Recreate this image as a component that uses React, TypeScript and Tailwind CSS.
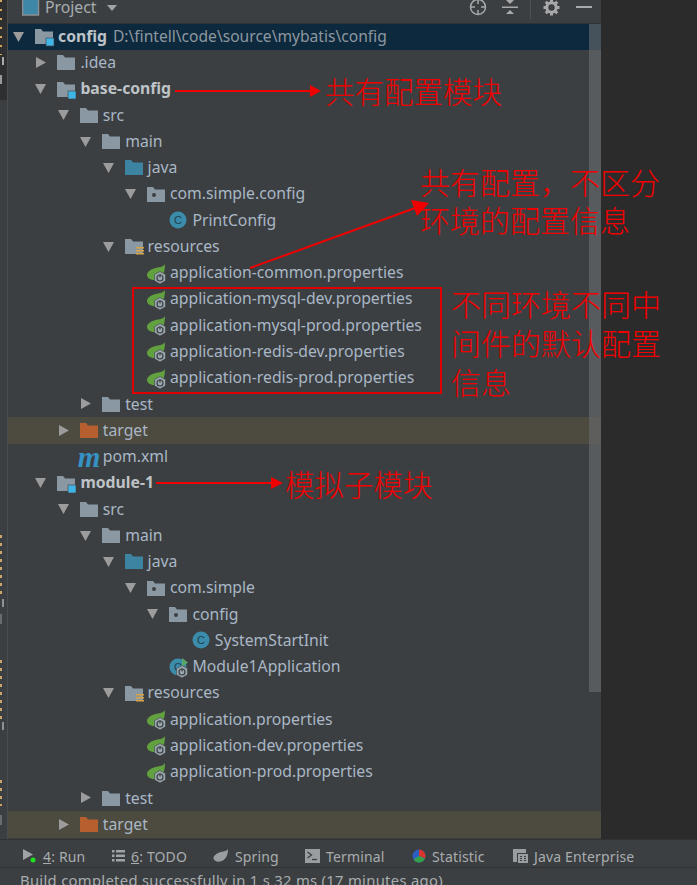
type Kind = 'module' | 'folder' | 'source' | 'package' | 'res' | 'excluded' | 'class' | 'app' | 'spring' | 'maven';

type Row = {
  depth: number;
  name: string;
  kind: Kind;
  open?: boolean;
  bold?: boolean;
  path?: string;
  selected?: boolean;
  tint?: boolean;
};

const rows: Row[] = [
  { depth: 0, name: 'config', kind: 'module', open: true, bold: true, path: 'D:\\fintell\\code\\source\\mybatis\\config', selected: true },
  { depth: 1, name: '.idea', kind: 'folder', open: false },
  { depth: 1, name: 'base-config', kind: 'module', open: true, bold: true },
  { depth: 2, name: 'src', kind: 'folder', open: true },
  { depth: 3, name: 'main', kind: 'folder', open: true },
  { depth: 4, name: 'java', kind: 'source', open: true },
  { depth: 5, name: 'com.simple.config', kind: 'package', open: true },
  { depth: 6, name: 'PrintConfig', kind: 'class' },
  { depth: 4, name: 'resources', kind: 'res', open: true },
  { depth: 5, name: 'application-common.properties', kind: 'spring' },
  { depth: 5, name: 'application-mysql-dev.properties', kind: 'spring' },
  { depth: 5, name: 'application-mysql-prod.properties', kind: 'spring' },
  { depth: 5, name: 'application-redis-dev.properties', kind: 'spring' },
  { depth: 5, name: 'application-redis-prod.properties', kind: 'spring' },
  { depth: 3, name: 'test', kind: 'folder', open: false },
  { depth: 2, name: 'target', kind: 'excluded', open: false, tint: true },
  { depth: 2, name: 'pom.xml', kind: 'maven' },
  { depth: 1, name: 'module-1', kind: 'module', open: true, bold: true },
  { depth: 2, name: 'src', kind: 'folder', open: true },
  { depth: 3, name: 'main', kind: 'folder', open: true },
  { depth: 4, name: 'java', kind: 'source', open: true },
  { depth: 5, name: 'com.simple', kind: 'package', open: true },
  { depth: 6, name: 'config', kind: 'package', open: true },
  { depth: 7, name: 'SystemStartInit', kind: 'class' },
  { depth: 6, name: 'Module1Application', kind: 'app' },
  { depth: 4, name: 'resources', kind: 'res', open: true },
  { depth: 5, name: 'application.properties', kind: 'spring' },
  { depth: 5, name: 'application-dev.properties', kind: 'spring' },
  { depth: 5, name: 'application-prod.properties', kind: 'spring' },
  { depth: 3, name: 'test', kind: 'folder', open: false },
  { depth: 2, name: 'target', kind: 'excluded', open: false, tint: true },
];

const folderPath = 'M0 1h6l2 2.5h10V16H0z';

function Hex() {
  return (
    <g>
      <path d="M13 7.500l5.500 3.100v6.200l-5.500 3.100-5.500-3.100v-6.200z" fill="#9aa7b0" stroke="#3c3f41" strokeWidth="0.6" />
      <circle cx="13" cy="14" r="3" fill="none" stroke="#3c3f41" strokeWidth="1.200" />
      <path d="M13 10.500v3" stroke="#3c3f41" strokeWidth="1.200" />
    </g>
  );
}

function TreeIcon({ kind }: { kind: Kind }) {
  if (kind === 'class' || kind === 'app') {
    return (
      <svg width="20" height="20" viewBox="0 0 20 20" className="mt-[1px]">
        <circle cx="9" cy="9" r="8.500" fill="#3b8cab" />
        <text x="9" y="13" textAnchor="middle" fontSize="11" fill="#22404f" fontFamily="Liberation Sans, sans-serif">C</text>
        {kind === 'app' && (
          <g>
            <path d="M13 0l6 4.500-6 4.500z" fill="#59a869" />
            <Hex />
          </g>
        )}
      </svg>
    );
  }
  if (kind === 'spring') {
    return (
      <svg width="20" height="20" viewBox="0 0 20 20" className="mt-[1px]">
        <path d="M18 0c-1 2-3 3-7 3.500C4 4.500 0 8 0 11c0 2.500 3 5 7 5 7 0 11-5 11-16z" fill="#62a13f" />
        <Hex />
      </svg>
    );
  }
  if (kind === 'maven') {
    return <span className="-ml-[2px] font-['Liberation_Serif',serif] text-[29px] leading-[20px] font-bold italic text-[#3592c4]">m</span>;
  }
  const fill = kind === 'source' ? '#3d84a3' : kind === 'excluded' ? '#b85f2f' : '#8a98a3';
  return (
    <svg width="20" height="20" viewBox="0 0 20 20" className="mt-[1px]">
      <path d={folderPath} transform="translate(0 1)" fill={fill} />
      {kind === 'package' && <circle cx="7" cy="10" r="2" fill="#3c3f41" />}
      {kind === 'module' && <rect x="11" y="11" width="8" height="8" fill="#3fb4e5" stroke="#3c3f41" strokeWidth="0.6" />}
      {kind === 'res' && (
        <g fill="#d9a343">
          <rect x="11" y="10" width="8" height="1.500" />
          <rect x="11" y="13" width="8" height="1.500" />
          <rect x="11" y="16" width="8" height="1.500" />
        </g>
      )}
    </svg>
  );
}

function Arrow({ open }: { open: boolean }) {
  return (
    <svg width="12" height="12" viewBox="0 0 12 12" className="ml-[5px] shrink-0">
      {open ? <path d="M0 1h11L5.500 11z" fill="#9c9c9c" /> : <path d="M1 0l10 5.500L1 11z" fill="#9c9c9c" />}
    </svg>
  );
}

function TreeRow({ row }: { row: Row }) {
  const bg = row.selected ? 'bg-[#0d293e]' : row.tint ? 'bg-[#4d4a3f]' : '';
  return (
    <div className={`flex h-[26.27px] items-center whitespace-nowrap ${bg}`} style={{ paddingLeft: row.depth * 22.4 }}>
      <div className="flex w-[27px] shrink-0 items-center">
        {row.open !== undefined && <Arrow open={row.open} />}
      </div>
      <div className="flex w-[23px] shrink-0 items-center">
        <TreeIcon kind={row.kind} />
      </div>
      <span className={row.bold ? 'font-bold text-[#bdc3c7]' : 'text-[#a9b7c6]'}>{row.name}</span>
      {row.path && <span className="ml-[6px] text-[15.6px] text-[#8d979f]">{row.path}</span>}
    </div>
  );
}

function Tool({ icon, num, label, width }: { icon: React.ReactNode; num?: string; label: string; width: string }) {
  return (
    <div className={`flex items-center gap-[6px] ${width}`}>
      {icon}
      <span>
        {num && <span className="underline">{num}</span>}
        {num && ': '}
        {label}
      </span>
    </div>
  );
}

export default function App() {
  return (
    <div className="relative flex h-[885px] w-[697px] flex-col overflow-hidden bg-[#3c3f41] font-['Noto_Sans',sans-serif] text-[15.75px]">
      <div className="flex min-h-0 flex-1">
        {/* left tool strip, cut off by the screenshot */}
        <div className="relative w-[8px] shrink-0 overflow-hidden border-r border-[#4a4d4f]">
          <div className="absolute left-0 top-0 h-[100px] w-[7px] bg-[#2d2f30]" />
          <div className="absolute left-0 top-0 h-[55px] w-[2px] bg-[repeating-linear-gradient(180deg,#d3a85c_0_2px,transparent_2px_9px)]" />
          <div className="absolute left-[2px] top-[57px] h-[8px] w-[2px] bg-[#a8a8a8]" />
          <div className="absolute left-0 top-[75px] h-[9px] w-[2px] bg-[#9a9a9a]" />
          <div className="absolute left-0 top-[535px] h-[62px] w-[2px] bg-[repeating-linear-gradient(180deg,#c9a768_0_3px,transparent_3px_8px)]" />
          <div className="absolute left-[2px] top-[599px] h-[8px] w-[2px] bg-[#8f9294]" />
          <div className="absolute left-0 top-[614px] h-[10px] w-[2px] bg-[#6a6d6f]" />
          <div className="absolute left-0 top-[660px] h-[62px] w-[2px] bg-[repeating-linear-gradient(180deg,#c9a768_0_3px,transparent_3px_8px)]" />
          <div className="absolute left-[2px] top-[722px] h-[8px] w-[2px] bg-[#8f9294]" />
          <div className="absolute left-0 top-[780px] h-[26px] w-[2px] bg-[repeating-linear-gradient(180deg,#c9a768_0_3px,transparent_3px_8px)]" />
          <div className="absolute left-0 top-[815px] h-[10px] w-[2px] bg-[#6a6d6f]" />
        </div>

        <div className="flex w-[593px] shrink-0 flex-col">
          <div className="flex h-[23.5px] shrink-0 items-start border-b border-[#323232] pr-[9px]">
            <svg width="18" height="16" viewBox="0 0 18 16" className="ml-[14px]">
              <rect x="0.500" y="-2" width="16" height="17" fill="#3f87a6" stroke="#8a8f93" strokeWidth="1.500" />
            </svg>
            <span className="-mt-[4px] ml-[5px] text-[#a8adb0]">Project</span>
            <svg width="10" height="6" viewBox="0 0 10 6" className="ml-[11px] mt-[5px]">
              <path d="M0 0h10L5 6z" fill="#a0a3a5" />
            </svg>
            <div className="ml-auto flex items-start">
              <svg width="18" height="18" viewBox="0 0 18 18" className="-mt-[2px]" fill="none" stroke="#a7a9ab" strokeWidth="1.500">
                <circle cx="9" cy="9" r="7.500" />
                <path d="M9 1v5M9 12v5M1 9h5M12 9h5" />
              </svg>
              <svg width="16" height="16" viewBox="0 0 16 16" className="ml-[15px]">
                <path d="M4 0h8L8 4z M0 6.500h16v1.500H0z M8 10l4 4H4z" fill="#a7a9ab" />
              </svg>
              <div className="ml-[12px] h-[19px] w-px bg-[#4f5254]" />
              <svg width="17" height="17" viewBox="0 0 17 17" className="ml-[12px] -mt-[1px]" fill="none" stroke="#a7a9ab">
                <circle cx="8.500" cy="8.500" r="4.700" strokeWidth="3" />
                <path d="M8.500 0.500v3M8.500 13.500v3M0.500 8.500h3M13.500 8.500h3M2.800 2.800l2.200 2.200M12 12l2.200 2.200M14.200 2.800L12 5M5 12l-2.200 2.200" strokeWidth="3" />
              </svg>
              <div className="ml-[16px] mt-[6px] h-[2px] w-[16px] bg-[#a7a9ab]" />
            </div>
          </div>
          <div className="relative min-h-0 flex-1 overflow-hidden">
            {rows.map((row, i) => (
              <TreeRow key={i} row={row} />
            ))}
            {/* scrollbar thumb */}
            <div className="absolute right-0 top-0 h-[668px] w-[12px] bg-[#6b6e70]/60" />
          </div>
        </div>

        <div className="flex-1 bg-[#2b2b2b]" />
      </div>

      <div className="flex h-[29px] shrink-0 items-center border-y border-[#323232] pl-[23px] pt-[5px] text-[14px] tracking-[0.15px] text-[#a8adb0]">
        <Tool
          width="w-[89px]"
          num="4"
          label="Run"
          icon={
            <svg width="14" height="16" viewBox="0 0 14 16">
              <path d="M0 1l10 5.500L0 12z" fill="#a0a3a5" />
              <circle cx="10" cy="12" r="2.500" fill="#1fe01f" />
            </svg>
          }
        />
        <Tool
          width="w-[101px]"
          num="6"
          label="TODO"
          icon={
            <svg width="13" height="12" viewBox="0 0 13 12" fill="#a0a3a5">
              <path d="M0 0h2.500v2.500H0zM4 0h9v2.500H4zM0 4.500h2.500V7H0zM4 4.500h9V7H4zM0 9h2.500v2.500H0zM4 9h9v2.500H4z" />
            </svg>
          }
        />
        <Tool
          width="w-[92px]"
          label="Spring"
          icon={
            <svg width="16" height="14" viewBox="0 0 16 14">
              <path d="M15 0c-1 2-4 2-7 3C3 4.500 0 7 0.500 9.500 1 12 4 13 7 12.500c5-1 8-5 8-12.500z" fill="#9a9d9f" />
            </svg>
          }
        />
        <Tool
          width="w-[107px]"
          label="Terminal"
          icon={
            <svg width="15" height="14" viewBox="0 0 15 14">
              <rect width="15" height="14" fill="#9a9d9f" />
              <path d="M2.500 3l4 3-4 3" fill="none" stroke="#3c3f41" strokeWidth="1.300" />
              <path d="M7 10.500h5" stroke="#3c3f41" strokeWidth="1.300" />
            </svg>
          }
        />
        <Tool
          width="w-[101px]"
          label="Statistic"
          icon={
            <svg width="14" height="14" viewBox="0 0 14 14">
              <circle cx="7" cy="7" r="6.500" fill="#2b5fc4" />
              <path d="M7 7V0.500A6.500 6.500 0 0 1 13 9.500z" fill="#d8352c" />
              <path d="M7 7l6 2.500a6.500 6.500 0 0 1-11.500 1z" fill="#35a04a" />
            </svg>
          }
        />
        <Tool
          width="w-[125px]"
          label="Java Enterprise"
          icon={
            <svg width="15" height="14" viewBox="0 0 15 14">
              <path d="M0 0h13v4H4v9H0z" fill="#9a9d9f" />
              <rect x="5" y="5" width="10" height="9" fill="#9a9d9f" />
              <path d="M7 7.500h2M7 9.500h2M7 11.500h2M11 7.500h2M11 9.500h2M11 11.500h2" stroke="#3c3f41" />
            </svg>
          }
        />
      </div>

      <div className="h-[17px] shrink-0 overflow-hidden whitespace-nowrap pl-[20px] text-[14.8px] leading-[25px] tracking-[0.3px] text-[#a8adb0]">
        Build completed successfully in 1 s 32 ms (17 minutes ago)
      </div>

      {/* red annotations drawn over the screenshot */}
      <svg width="697" height="885" viewBox="0 0 697 885" className="pointer-events-none absolute left-0 top-0">
        <g stroke="#f00000" strokeWidth="2" fill="#f00000">
          <path d="M175 91h136" />
          <path d="M310 85l11 6-11 6z" stroke="none" />
          <path d="M250 268L418 207" />
          <path d="M411 200l18 3-12 13z" stroke="none" />
          <path d="M156 483h116" />
          <path d="M271 477l12 6-12 6z" stroke="none" />
        </g>
      </svg>
      <div className="absolute left-[132px] top-[287px] h-[107px] w-[310px] border-2 border-[#e00000]" />
      <div className="absolute left-[325px] top-[70px] font-['Noto_Sans_CJK_SC',sans-serif] text-[29.5px] leading-[40px] font-light text-[#f00000]">共有配置模块</div>
      <div className="absolute left-[420px] top-[162px] w-[245px] font-['Noto_Sans_CJK_SC',sans-serif] text-[30px] leading-[38px] font-light text-[#f00000]">
        {'共有配置\uFF0C不区分'}
        <br />
        环境的配置信息
      </div>
      <div className="absolute left-[451px] top-[284px] w-[240px] font-['Noto_Sans_CJK_SC',sans-serif] text-[30px] leading-[39px] font-light text-[#f00000]">
        不同环境不同中
        <br />
        间件的默认配置
        <br />
        信息
      </div>
      <div className="absolute left-[285px] top-[463px] font-['Noto_Sans_CJK_SC',sans-serif] text-[29.5px] leading-[40px] font-light text-[#f00000]">模拟子模块</div>
    </div>
  );
}
